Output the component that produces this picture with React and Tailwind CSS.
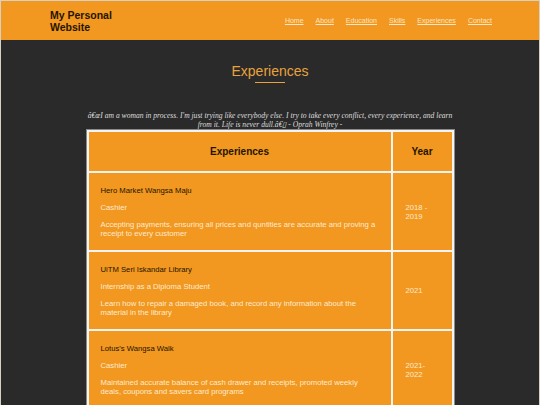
const links = ['Home', 'About', 'Education', 'Skills', 'Experiences', 'Contact']

const jobs = [
  {
    place: 'Hero Market Wangsa Maju',
    role: 'Cashier',
    desc: 'Accepting payments, ensuring all prices and quntities are accurate and proving a receipt to every customer',
    year: '2018 - 2019',
  },
  {
    place: 'UiTM Seri Iskandar Library',
    role: 'Internship as a Diploma Student',
    desc: 'Learn how to repair a damaged book, and record any information about the material in the library',
    year: '2021',
  },
  {
    place: "Lotus's Wangsa Walk",
    role: 'Cashier',
    desc: 'Maintained accurate balance of cash drawer and receipts, promoted weekly deals, coupons and savers card programs',
    year: '2021-2022',
  },
]

export default function App() {
  return (
    <div className="w-[540px] h-[405px] overflow-hidden bg-[#2a2a2a] border-x border-t border-[#d8d0c0] font-['Liberation_Sans',Arial,sans-serif]">
      <header className="h-[39px] bg-[#f2971f] flex items-center justify-between pl-[49px] pr-[47px]">
        <div className="text-[10.5px] leading-[12px] font-bold text-[#231500] w-[70px]">
          My Personal Website
        </div>
        <nav className="flex gap-[12px] text-[7px] mt-[2px]">
          {links.map(l => (
            <a key={l} href="#" className="underline text-[#fbe6c6]">{l}</a>
          ))}
        </nav>
      </header>

      <section className="flex flex-col items-center">
        <h2 className="mt-[23px] text-[14px] leading-[16px] text-[#e9a23c]">Experiences</h2>
        <div className="mt-[3px] w-[30px] h-px bg-[#e9a23c]" />
        <p className="mt-[28px] w-[372px] text-center italic text-[7.6px] leading-[9px] text-[#dcdcdc] font-['Liberation_Serif',serif]">
          â€œI am a woman in process. I'm just trying like everybody else. I try to take every conflict, every experience, and learn from it. Life is never dull.â€{'\u25af'} - Oprah Winfrey -
        </p>

        <table className="w-[369px] table-fixed border-separate border-spacing-[2px] bg-[#f4f4f4] border border-[#8a8a8a]">
          <colgroup>
            <col className="w-[302px]" />
            <col />
          </colgroup>
          <thead>
            <tr>
              <th className="h-[39px] bg-[#f2971f] text-[10px] font-bold text-[#231500]">Experiences</th>
              <th className="bg-[#f2971f] text-[10px] font-bold text-[#231500]">Year</th>
            </tr>
          </thead>
          <tbody>
            {jobs.map(j => (
              <tr key={j.place}>
                <td className="bg-[#f2971f] px-[12px] py-[12.5px] align-middle text-[7.7px] leading-[9px]">
                  <p className="text-[#231500]">{j.place}</p>
                  <p className="mt-[8px] text-[#fdebd0]">{j.role}</p>
                  <p className="mt-[8px] text-[#fdebd0]">{j.desc}</p>
                </td>
                <td className="bg-[#f2971f] px-[13px] align-middle text-[7.7px] leading-[9px] text-[#fdebd0]">
                  {j.year}
                </td>
              </tr>
            ))}
          </tbody>
        </table>
      </section>
    </div>
  )
}
